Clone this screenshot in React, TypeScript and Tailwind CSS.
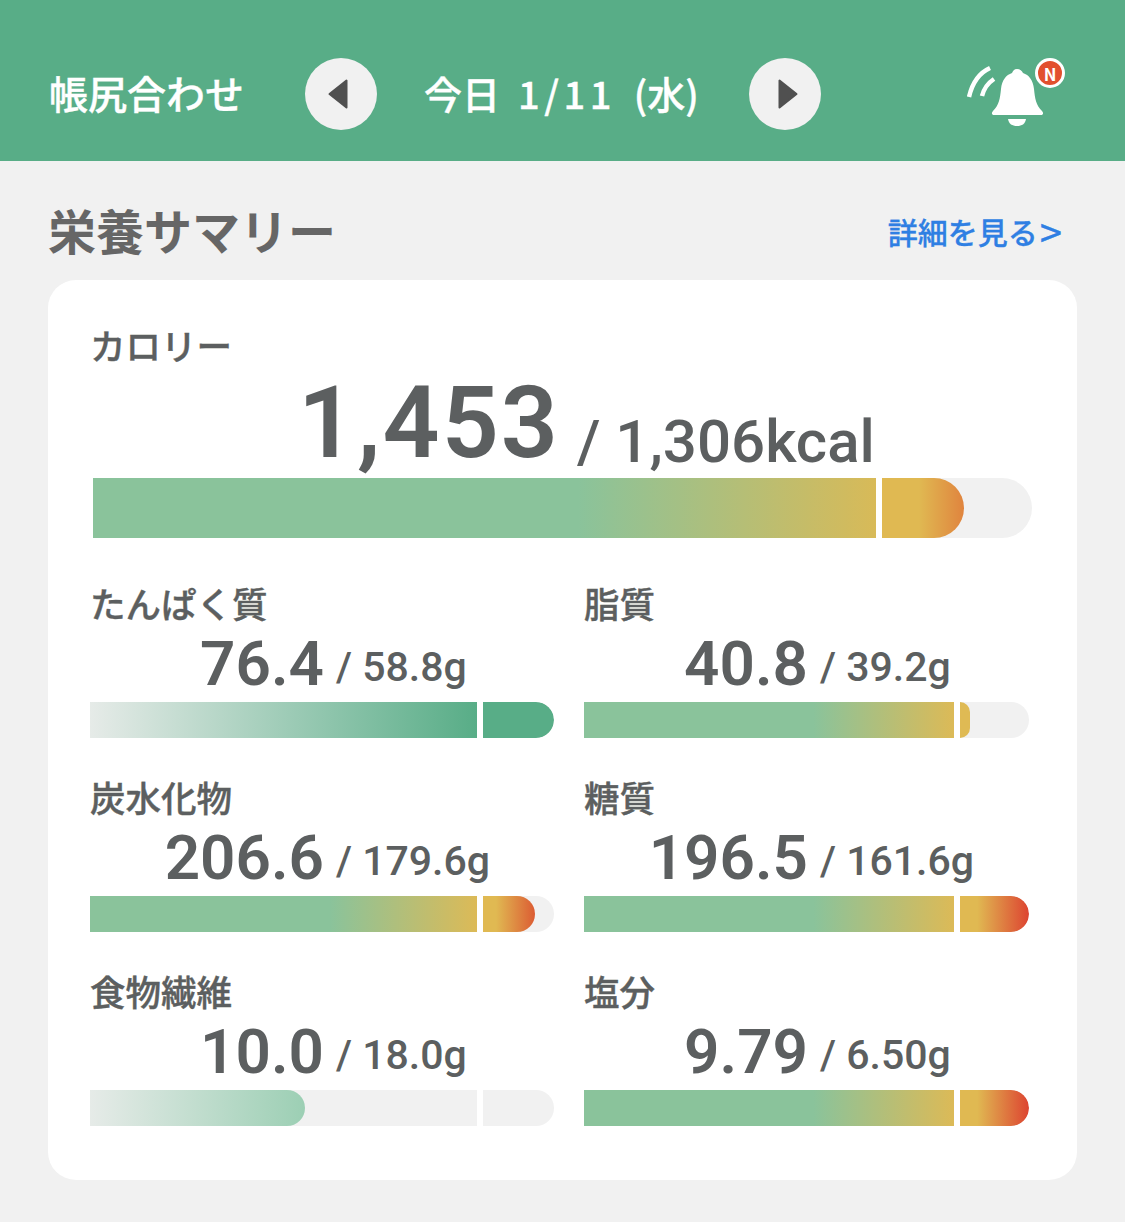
import { ReactNode } from "react";

const cjk = { fontFamily: '"Noto Sans CJK JP", sans-serif' };
const latinFont = "font-['Roboto','Noto_Sans_CJK_JP',sans-serif]";

type Fill = { first: string; firstWidth: string; second?: string; secondWidth?: string; tail: string };

const greenToYellow = "bg-[linear-gradient(90deg,#8ac39b_62%,#dcba57_100%)]";
const yellowToRed = "bg-[linear-gradient(90deg,#e0b952_25%,#dd4431_100%)]";

const nutrients = [
  {
    label: "たんぱく質", value: "76.4", target: "/ 58.8g",
    first: "bg-[linear-gradient(90deg,#e6ebe8_0%,#58ad87_100%)]", firstWidth: "w-full",
    second: "bg-[#58ad87]", secondWidth: "w-full",
  },
  {
    label: "脂質", value: "40.8", target: "/ 39.2g",
    first: greenToYellow, firstWidth: "w-full",
    second: "bg-[#dfba54]", secondWidth: "w-[10px]",
  },
  {
    label: "炭水化物", value: "206.6", target: "/ 179.6g",
    first: greenToYellow, firstWidth: "w-full",
    second: "bg-[linear-gradient(90deg,#e0b952_25%,#dc5c33_100%)]", secondWidth: "w-[52px]",
  },
  {
    label: "糖質", value: "196.5", target: "/ 161.6g",
    first: greenToYellow, firstWidth: "w-full",
    second: yellowToRed, secondWidth: "w-full",
  },
  {
    label: "食物繊維", value: "10.0", target: "/ 18.0g",
    first: "bg-[linear-gradient(90deg,#e6ebe8_0%,#9ccfb4_100%)] rounded-r-full", firstWidth: "w-[215px]",
  },
  {
    label: "塩分", value: "9.79", target: "/ 6.50g",
    first: greenToYellow, firstWidth: "w-full",
    second: yellowToRed, secondWidth: "w-full",
  },
];

function SmallBar({ first, firstWidth, second, secondWidth, tail }: Fill) {
  return (
    <div className="flex h-9 gap-1.5">
      <div className="flex-1 bg-[#f1f1f1]">
        <div className={`h-full ${first} ${firstWidth}`} />
      </div>
      <div className={`overflow-hidden rounded-r-full bg-[#f1f1f1] ${tail}`}>
        {second && <div className={`h-full rounded-r-full ${second} ${secondWidth}`} />}
      </div>
    </div>
  );
}

function Bell() {
  return (
    <div className="relative h-[70px] w-[100px]">
      <svg viewBox="0 0 100 70" className="h-full w-full" fill="none">
        <path d="M2 38 C5 25 12 14 23 9" stroke="#fff" strokeWidth="4.5" />
        <path d="M15 37 C17 29 21 24 27 20" stroke="#fff" strokeWidth="4.5" />
        <path
          d="M50 10 C53 10 55 12 56 14 C62 16 66 21 67 30 C68 40 69 46 75 52 C77 54 76 56 74 56 L27 56 C25 56 24 54 26 52 C32 46 33 40 34 30 C35 21 39 16 45 14 C46 12 47 10 50 10 Z"
          fill="#fff"
        />
        <path d="M41 60 L59 60 C58 65 55 67 50 67 C45 67 42 65 41 60 Z" fill="#fff" />
      </svg>
      <span className="absolute left-[68px] top-[-1px] flex h-[30px] w-[30px] items-center justify-center rounded-full border-[3px] border-white bg-[#e2502e] text-[17px] font-semibold leading-none text-white">
        N
      </span>
    </div>
  );
}

function NavButton({ children }: { children: ReactNode }) {
  return (
    <button className="flex h-[72px] w-[72px] shrink-0 items-center justify-center rounded-full bg-[#f1f1f1]">
      {children}
    </button>
  );
}

export default function App() {
  return (
    <div className="min-h-[1222px] bg-[#f1f1f1] text-[#5c5f60]" style={cjk}>
      {/* Header */}
      <header className="flex h-[161px] items-center bg-[#58ad87] pl-[50px] pr-[58px] pt-[27px] text-white">
        <h1 className="-ml-px mb-1 w-[256px] text-[39px] font-medium leading-none [-webkit-text-stroke:0.4px_#fff]">
          帳尻合わせ
        </h1>
        <NavButton>
          <svg viewBox="0 0 20 30" className="mr-1.5 h-[30px] w-5">
            <path d="M18.5 1.5 L18.5 28.5 L1.5 15 Z" fill="#505050" stroke="#505050" strokeWidth="2" strokeLinejoin="round" />
          </svg>
        </NavButton>
        <div className="mb-[3px] flex w-[372px] items-center whitespace-nowrap pl-[47px] text-[38px] font-medium leading-none [-webkit-text-stroke:0.4px_#fff]">
          <span>今日</span>
          <span className="ml-[18px] tracking-[4.5px]">1/11</span>
          <span className="ml-[18px]">(水)</span>
        </div>
        <NavButton>
          <svg viewBox="0 0 20 30" className="ml-1.5 h-[30px] w-5">
            <path d="M1.5 1.5 L1.5 28.5 L18.5 15 Z" fill="#505050" stroke="#505050" strokeWidth="2" strokeLinejoin="round" />
          </svg>
        </NavButton>
        <div className="ml-auto">
          <Bell />
        </div>
      </header>

      <main className="px-12 pt-[43px]">
        <div className="flex h-[50px] items-center justify-between pr-[15px]">
          <h2 className="text-[48px] font-bold leading-[50px] text-[#666]">栄養サマリー</h2>
          <a className="flex items-center pt-1 text-[30px] font-medium leading-[46px] text-[#2f7fe3] [-webkit-text-stroke:0.3px_#2f7fe3]">
            詳細を見る
            <span className="ml-0.5 text-[40px] font-normal leading-none">&gt;</span>
          </a>
        </div>

        {/* Card */}
        <section className="mt-[26px] h-[900px] rounded-[28px] bg-white pl-[42px] pr-[45px] pt-11">
          <div className="text-[35.5px] font-medium leading-[42px] [-webkit-text-stroke:0.4px_#5c5f60]">カロリー</div>
          <div className={`flex h-[112px] items-end whitespace-nowrap ${latinFont}`}>
            <span className="w-[470px] text-right text-[100px] font-semibold leading-[110px] tracking-[2px]">1,453</span>
            <span className="ml-[17px] text-[60px] font-medium leading-[72px]">/ 1,306kcal</span>
          </div>
          <div className="ml-[3px] flex h-[60px] overflow-hidden rounded-r-full bg-[#f1f1f1]">
            <div className="h-full w-[783px] bg-[linear-gradient(90deg,#8ac39b_62%,#d8ba58_100%)]" />
            <div className="h-full w-1.5 bg-white" />
            <div className="h-full w-[82px] rounded-r-full bg-[linear-gradient(90deg,#e0b952_45%,#e0843e_100%)]" />
          </div>

          {/* Nutrients */}
          <div className="mt-[43px] grid grid-cols-[464px_445px] gap-x-[30px] gap-y-[37px]">
            {nutrients.map((n, i) => (
              <div key={n.label}>
                <div className="mb-[9px] text-[35.5px] font-medium leading-[44px] [-webkit-text-stroke:0.4px_#5c5f60]">
                  {n.label}
                </div>
                <div className={`flex h-[62px] items-end whitespace-nowrap ${latinFont}`}>
                  <span
                    className={`text-right text-[62px] font-semibold leading-[64px] ${
                      i % 2 === 0 ? "w-[234px]" : "w-[224px]"
                    }`}
                  >
                    {n.value}
                  </span>
                  <span className="ml-[12px] text-[41px] font-medium leading-[57px]">{n.target}</span>
                </div>
                <div className="mt-1.5">
                  <SmallBar
                    first={n.first}
                    firstWidth={n.firstWidth}
                    second={n.second}
                    secondWidth={n.secondWidth}
                    tail={i % 2 === 0 ? "w-[71px]" : "w-[69px]"}
                  />
                </div>
              </div>
            ))}
          </div>
        </section>
      </main>
    </div>
  );
}
